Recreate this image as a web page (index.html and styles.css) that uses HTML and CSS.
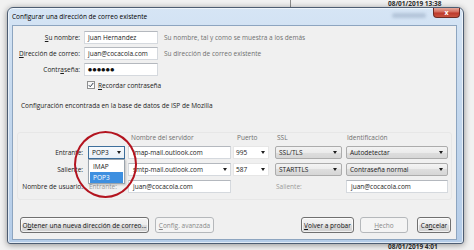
FILE: index.html
```html
<!DOCTYPE html>
<html lang="es">
<head>
<meta charset="utf-8">
<title>Configurar una dirección de correo existente</title>
<link rel="stylesheet" href="styles.css">
</head>
<body>
<div class="desk-line"></div>
<div class="stamp stamp-top">08/01/2019 13:38</div>
<div class="stamp stamp-bottom">08/01/2019 4:01</div>
<div class="window">
  <div class="titlebar">
    <span class="title">Configurar una dirección de correo existente</span>
    <span class="glass"></span>
    <span class="close">x</span>
  </div>
  <div class="content">
    <div class="frow">
      <span class="flabel"><u>S</u>u nombre:</span>
      <span class="field wide">Juan Hernandez</span>
      <span class="hint">Su nombre, tal y como se muestra a los demás</span>
    </div>
    <div class="frow">
      <span class="flabel"><u>D</u>irección de correo:</span>
      <span class="field wide">juan@cocacola.com</span>
      <span class="hint">Su dirección de correo existente</span>
    </div>
    <div class="frow">
      <span class="flabel">Contr<u>a</u>seña:</span>
      <span class="field wide"><span class="dots">●●●●●●</span></span>
    </div>
    <div class="checkrow">
      <span class="checkbox"><svg viewBox="0 0 8 8" width="6" height="6"><path d="M1 4.2 L3 6.3 L7 1.3" fill="none" stroke="#2b3a4a" stroke-width="1.3"/></svg></span>
      <span><u>R</u>ecordar contraseña</span>
    </div>
    <p class="found">Configuración encontrada en la base de datos de ISP de Mozilla</p>
    <div class="group">
      <div class="grid">
        <span></span><span></span>
        <span class="head pad3">Nombre del servidor</span>
        <span class="head pad4">Puerto</span>
        <span class="head pad2">SSL</span>
        <span class="head pad1">Identificación</span>

        <span class="glabel">Entrante:</span>
        <span class="cell">
          <span class="combo open">POP3<span class="arrow"></span></span>
          <span class="droplist">
            <span class="opt">IMAP</span>
            <span class="opt sel-opt">POP3</span>
          </span>
        </span>
        <span class="field server">imap-mail.outlook.com</span>
        <span class="port">995<span class="arrow"></span></span>
        <span class="sel ssl">SSL/TLS<span class="arrow"></span></span>
        <span class="sel ident">Autodetectar<span class="arrow"></span></span>

        <span class="glabel">Saliente:</span>
        <span></span>
        <span class="field server">smtp-mail.outlook.com<span class="arrow"></span></span>
        <span class="port">587<span class="arrow"></span></span>
        <span class="sel ssl">STARTTLS<span class="arrow"></span></span>
        <span class="sel ident">Contraseña normal<span class="arrow"></span></span>

        <span class="glabel">Nombre de usuario:</span>
        <span class="dim pad1">Entrante:</span>
        <span class="field server">juan@cocacola.com</span>
        <span></span>
        <span class="dim pad1">Saliente:</span>
        <span class="field ident">juan@cocacola.com</span>
      </div>
    </div>
    <div class="buttons">
      <span class="btn b-new">O<u>b</u>tener una nueva dirección de correo...</span>
      <span class="btn b-adv disabled"><u>C</u>onfig. avanzada</span>
      <span class="spacer"></span>
      <span class="btn b-retry"><u>V</u>olver a probar</span>
      <span class="btn b-done disabled"><u>H</u>echo</span>
      <span class="btn b-cancel">Ca<u>n</u>celar</span>
    </div>
  </div>
</div>
<div class="highlight"></div>
</body>
</html>
```
FILE: styles.css
```css
* { box-sizing: border-box; }
html, body { margin: 0; padding: 0; }
body {
  width: 474px;
  height: 250px;
  overflow: hidden;
  position: relative;
  background: #f1f1f1;
  font-family: "Open Sans", "Noto Sans", sans-serif;
  font-size: 6.5px;
  color: #1b1b1b;
}
u { text-decoration: underline; text-underline-offset: 1px; }

.desk-line { position: absolute; left: 290px; top: 0; width: 1px; height: 8px; background: #8c8c8c; }
.stamp { position: absolute; left: 388px; font-weight: 700; font-size: 6.5px; line-height: 7px; color: #2e2e2e; }
.stamp-top { top: 0; }
.stamp-bottom { top: 243px; }

.window {
  position: absolute;
  left: 7px;
  top: 7px;
  width: 457px;
  height: 237px;
  border: 1px solid #4d5d72;
  border-radius: 6px 6px 3px 3px;
  background: linear-gradient(to bottom, #d6e5f5 0%, #c4d8ee 40%, #b4cce8 100%);
  padding: 0 6px 3px 4px;
  display: flex;
  flex-direction: column;
  box-shadow: 0 1px 6px rgba(0, 0, 0, 0.4), inset 0 0 0 1px rgba(255, 255, 255, 0.6);
}
.titlebar {
  height: 17px;
  display: flex;
  align-items: center;
  position: relative;
}
.title { color: #000; line-height: 10px; }
.glass {
  position: absolute;
  left: 380px;
  top: 5px;
  width: 34px;
  height: 5px;
  border-radius: 3px;
  background: rgba(120, 140, 170, 0.35);
  filter: blur(1.5px);
}
.close {
  position: absolute;
  right: -3px;
  top: 0;
  width: 27px;
  height: 10px;
  border: 1px solid #6e2b24;
  border-top: none;
  border-radius: 0 0 4px 4px;
  background: linear-gradient(to bottom, #e6a99c 0%, #d3695a 45%, #bd3a2c 55%, #c9533f 100%);
  color: #fff;
  font-size: 7px;
  font-weight: 700;
  line-height: 9px;
  text-align: center;
}
.content {
  flex: 1;
  background: #f0f0f0;
  border: 1px solid #8da5c0;
  padding-top: 5px;
  display: flex;
  flex-direction: column;
}

.frow { display: flex; align-items: center; height: 13px; margin-bottom: 3px; }
.flabel { width: 67px; margin-right: 4px; text-align: right; white-space: nowrap; }
.field {
  display: flex;
  align-items: center;
  height: 13px;
  background: #fff;
  border: 1px solid #d5d9de;
  border-top-color: #b4b8be;
  padding: 0 3px;
  white-space: nowrap;
  line-height: 11px;
}
.wide { width: 74px; }
.hint { margin-left: 6px; color: #6f6f6f; white-space: nowrap; }
.dots { font-family: "DejaVu Sans", sans-serif; font-size: 4.6px; letter-spacing: 0.45px; color: #111; }

.checkrow { display: flex; align-items: center; height: 12px; padding-left: 74px; }
.checkbox {
  width: 8px;
  height: 8px;
  margin-right: 3px;
  border: 1px solid #8e8f8f;
  background: linear-gradient(#f4f4f4, #fff);
  display: flex;
  align-items: center;
  justify-content: center;
}
.checkbox svg { display: block; }

.found { margin: 10px 0 0 8px; line-height: 10px; }

.group {
  margin: 21px 0 0 4px;
  width: 435px;
  border: 1px solid #e7e7e7;
  border-radius: 3px;
  padding-bottom: 6px;
}
.grid {
  display: grid;
  grid-template-columns: 70px 40px 105px 42px 71px 102px;
  grid-template-rows: 9px 13px 13px 13px;
  row-gap: 4px;
  align-items: center;
}
.head { color: #6f6f6f; line-height: 9px; white-space: nowrap; }
.pad1 { padding-left: 1px; }
.pad2 { padding-left: 2px; }
.pad3 { padding-left: 3px; }
.pad4 { padding-left: 4px; }
.glabel { text-align: right; padding-right: 5px; white-space: nowrap; }
.dim { color: #9a9a9a; white-space: nowrap; }
.cell { position: relative; height: 13px; }

.arrow {
  margin-left: auto;
  width: 0;
  height: 0;
  border-left: 2.5px solid transparent;
  border-right: 2.5px solid transparent;
  border-top: 3px solid #1e1e1e;
  flex: none;
}
.combo {
  display: flex;
  align-items: center;
  width: 37px;
  height: 13px;
  padding: 0 3px 0 3px;
  border: 1px solid #3d6f9c;
  background: linear-gradient(#f7fafd, #e9f0f7);
  color: #111;
}
.droplist {
  position: absolute;
  left: 0;
  top: 13px;
  width: 37px;
  height: 25px;
  background: #fff;
  border: 1px solid #9aa4ad;
  display: flex;
  flex-direction: column;
  padding: 1px;
  box-shadow: 1px 1px 2px rgba(0, 0, 0, 0.2);
}
.opt { height: 11px; line-height: 11px; padding-left: 3px; }
.sel-opt { background: #3d8fe0; color: #fff; }

.server { width: 103px; padding-left: 4px; }
.port {
  display: flex;
  align-items: center;
  width: 36px;
  height: 13px;
  background: #fff;
  border: 1px solid #e6e6e6;
  padding: 0 3px 0 2px;
}
.sel {
  display: flex;
  align-items: center;
  height: 13px;
  padding: 0 4px 0 3px;
  border: 1px solid #acacac;
  border-radius: 2px;
  background: linear-gradient(to bottom, #f3f3f3 0%, #ebebeb 50%, #dedede 50%, #d6d6d6 100%);
  white-space: nowrap;
}
.ssl { width: 67px; }
.ident { width: 102px; }
.field.ident { padding-left: 4px; }

.buttons {
  margin-top: auto;
  margin-bottom: 6px;
  height: 16px;
  display: flex;
  padding: 0 5px 0 7px;
}
.spacer { flex: 1; }
.btn {
  height: 16px;
  display: flex;
  align-items: center;
  justify-content: center;
  white-space: nowrap;
  border: 1px solid #707070;
  border-radius: 3px;
  background: linear-gradient(to bottom, #f4f4f4 0%, #ececec 50%, #dedede 50%, #d0d0d0 100%);
  box-shadow: inset 0 0 0 1px rgba(255, 255, 255, 0.7);
  color: #111;
}
.btn.disabled {
  border-color: #b5b8bb;
  background: #f4f4f4;
  color: #8a8a8a;
  box-shadow: none;
}
.b-new { width: 129px; }
.b-adv { width: 59px; margin-left: 6px; }
.b-retry { width: 53px; }
.b-done { width: 48px; margin-left: 6px; }
.b-cancel { width: 34px; margin-left: 9px; }

.highlight {
  position: absolute;
  left: 74px;
  top: 131px;
  width: 63px;
  height: 67px;
  border: 2.5px solid #b3141f;
  border-radius: 50%;
}
```
